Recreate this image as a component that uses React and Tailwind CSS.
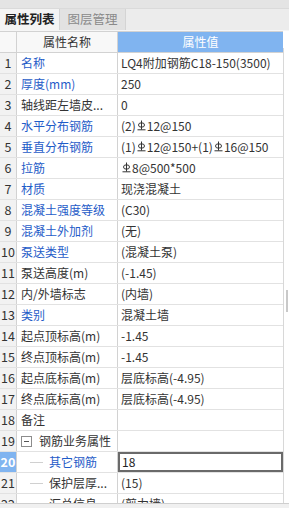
import React from "react";

const BLUE = "text-[#1f5cc8]";

// HRB400 rebar mark drawn as a tiny svg
const Rebar = () => (
  <svg width="9" height="11" viewBox="0 0 9 11" className="inline-block mx-[1px] -mt-[2px] align-middle" fill="none" stroke="currentColor" strokeWidth="1">
    <ellipse cx="4.5" cy="5" rx="3" ry="2.2" />
    <line x1="4.5" y1="0.5" x2="4.5" y2="9.5" />
    <line x1="0.5" y1="9.8" x2="8.5" y2="9.8" />
  </svg>
);

const rows = [
  { name: "名称", blue: true, value: "LQ4附加钢筋C18-150(3500)" },
  { name: "厚度(mm)", blue: true, value: "250" },
  { name: "轴线距左墙皮...", value: "0" },
  { name: "水平分布钢筋", blue: true, value: <>(2)<Rebar />12@150</> },
  { name: "垂直分布钢筋", blue: true, value: <>(1)<Rebar />12@150+(1)<Rebar />16@150</> },
  { name: "拉筋", blue: true, value: <><Rebar />8@500*500</> },
  { name: "材质", blue: true, value: "现浇混凝土" },
  { name: "混凝土强度等级", blue: true, value: "(C30)" },
  { name: "混凝土外加剂", blue: true, value: "(无)" },
  { name: "泵送类型", blue: true, value: "(混凝土泵)" },
  { name: "泵送高度(m)", value: "(-1.45)" },
  { name: "内/外墙标志", value: "(内墙)" },
  { name: "类别", blue: true, value: "混凝土墙" },
  { name: "起点顶标高(m)", value: "-1.45" },
  { name: "终点顶标高(m)", value: "-1.45" },
  { name: "起点底标高(m)", value: "层底标高(-4.95)" },
  { name: "终点底标高(m)", value: "层底标高(-4.95)" },
  { name: "备注", value: "" },
  { name: "钢筋业务属性", value: "", group: true },
  { name: "其它钢筋", blue: true, value: "18", child: true, selected: true },
  { name: "保护层厚...", value: "(15)", child: true },
  { name: "汇总信息", value: "(剪力墙)", child: true },
];

const TreeLine = () => (
  <span className="ml-[13px] mr-[6px] w-[13px] h-[1px] bg-[#d0d0d0] shrink-0" />
);

export default function App() {
  return (
    <div
      className="w-[289px] h-[508px] overflow-hidden flex flex-col bg-white text-[12px] text-[#333]"
      style={{ fontFamily: '"Noto Sans CJK SC", "Noto Sans", sans-serif' }}
    >
      <div className="h-[9px] bg-[#e4e4e4] border-b border-[#dadada]" />
      <div className="h-[21px] bg-[#ececec] flex items-stretch">
        <div className="w-[60px] bg-[#f4f4f4] border-r border-[#d4d4d4] flex items-center justify-center font-bold text-[#222] text-[12.5px]">
          属性列表
        </div>
        <div className="w-[66px] bg-[#e2e2e2] border-r border-[#d4d4d4] flex items-center justify-center text-[#8a8a8a] text-[12.5px]">
          图层管理
        </div>
      </div>
      <div className="h-[1px] bg-[#f6f6f6]" />

      <div className="flex h-[472px] overflow-hidden">
        <div className="w-[283px] flex flex-col">
          <div className="grid grid-cols-[17px_101px_165px] h-[22px] shrink-0 border-y border-[#d2d2d2]">
            <div className="bg-[#f8f8f8] border-r border-[#d2d2d2]" />
            <div className="bg-[#f8f8f8] border-r border-[#d2d2d2] flex items-center justify-center">属性名称</div>
            <div className="bg-[#80b4f0] text-white flex items-center justify-center">属性值</div>
          </div>
          {rows.map((r, i) => (
            <div key={i} className="grid grid-cols-[17px_101px_165px] h-[21px] shrink-0 border-b border-[#e2e2e2]">
              <div
                className={
                  r.selected
                    ? "bg-[#80b4f0] text-white font-bold flex items-center justify-center border-r border-[#d2d2d2] text-[12.5px]"
                    : "bg-[#f2f2f2] flex items-center justify-center border-r border-[#d2d2d2] text-[12.5px]"
                }
              >
                {i + 1}
              </div>
              <div className={"flex items-center border-r border-[#d2d2d2] whitespace-nowrap overflow-hidden " + (r.child ? "" : "pl-[4px]")}>
                {r.group && (
                  <span className="w-[11px] h-[11px] border border-[#8c8c8c] flex items-center justify-center mr-[7px] bg-white">
                    <span className="w-[5px] border-t border-[#555]" />
                  </span>
                )}
                {r.child && <TreeLine />}
                <span className={r.blue ? BLUE : ""}>{r.name}</span>
              </div>
              <div
                className={
                  r.selected
                    ? "flex items-center pl-[2px] border-2 border-[#6a6a6a] whitespace-nowrap overflow-hidden text-[#222]"
                    : "flex items-center pl-[3px] whitespace-nowrap overflow-hidden"
                }
              >
                {r.value}
              </div>
            </div>
          ))}
        </div>
        <div className="w-[6px] flex flex-col">
          <div className="h-[17px] bg-white" />
          <div className="flex-1 border-l border-[#d8d8d8] bg-white relative">
            <div className="absolute left-[2px] top-[242px] w-[2px] h-[22px] bg-[#c9c9c9]" />
          </div>
        </div>
      </div>
      <div className="flex-1 bg-[#f0f0f0] border-t border-[#cfcfcf]" />
    </div>
  );
}
